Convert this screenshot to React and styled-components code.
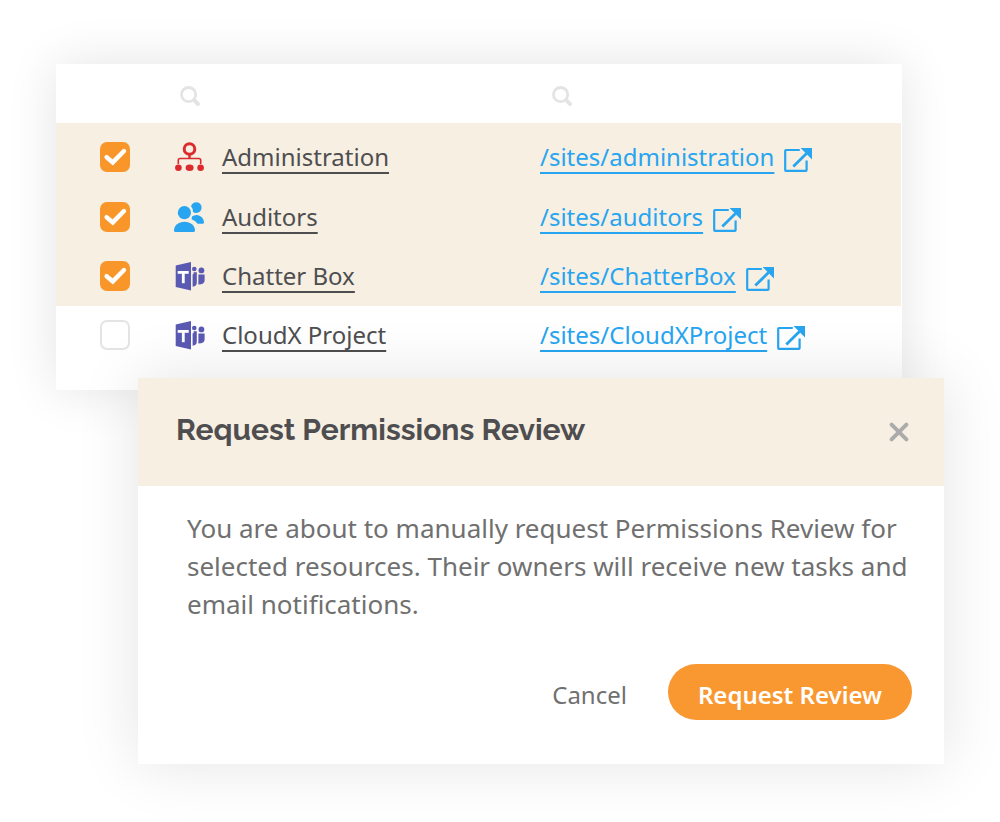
import React, { useState } from "react";
import styled, { createGlobalStyle } from "styled-components";

const resources = [
	{ id: 1, name: "Administration", url: "/sites/administration", type: "org" },
	{ id: 2, name: "Auditors", url: "/sites/auditors", type: "group" },
	{ id: 3, name: "Chatter Box", url: "/sites/ChatterBox", type: "teams" },
	{ id: 4, name: "CloudX Project", url: "/sites/CloudXProject", type: "teams" },
];

const OrgIcon = () => (
	<svg width="30" height="30" viewBox="0 0 30 30" fill="#db2b2d" aria-hidden="true">
		<circle cx="15.5" cy="7" r="5.3" fill="none" stroke="#db2b2d" strokeWidth="3" />
		<path d="M4.3 22V18.2Q4.3 16.5 6 16.5H25Q26.7 16.5 26.7 18.2V22" fill="none" stroke="#db2b2d" strokeWidth="1.6" />
		<rect x="14.3" y="13" width="2.4" height="4" />
		<circle cx="4.4" cy="25.8" r="3.3" />
		<ellipse cx="15.6" cy="25.8" rx="4" ry="3.3" />
		<circle cx="26.6" cy="25.8" r="3.3" />
	</svg>
);

const GroupIcon = () => (
	<svg width="30" height="30" viewBox="0 0 30 30" fill="#27a5f0" aria-hidden="true">
		<circle cx="10.4" cy="10.7" r="6.6" />
		<path d="M0 28.4C0 23.6 4.6 19.7 10.5 19.7S21 23.6 21 28.4Q21 30 19.4 30H1.6Q0 30 0 28.4Z" />
		<path d="M17 4.2A5.4 5.4 0 1 1 19 9.9Q19.2 6.6 17 4.2Z" />
		<path d="M18 14.6Q20 12.9 22.6 13C26.8 13.2 30 16.5 30 20.4Q30 21.8 28.6 21.8H23.6Q21.4 18.4 17.6 17.2Z" />
	</svg>
);

const TeamsIcon = () => (
	<svg width="30" height="30" viewBox="0 0 30 30" fill="#5a5ab3" aria-hidden="true">
		<path d="M1.7 4.6L17 1V29.4L1.7 26Z" />
		<rect x="3.7" y="10" width="11" height="2.8" fill="#fff" />
		<rect x="7.9" y="10" width="2.8" height="12.2" fill="#fff" />
		<circle cx="20.3" cy="8" r="2.3" />
		<circle cx="27.4" cy="9.4" r="2.9" />
		<path d="M18.6 13.2H19.6V11.2H22.8V21.6Q22.8 25.6 18.6 25.8Z" />
		<path d="M24.4 13.4H30.6V19.4Q30.6 23.2 24.4 23.6Z" />
	</svg>
);

const ExternalIcon = () => (
	<svg width="28" height="24" viewBox="0 0 28 24" aria-hidden="true">
		<path d="M15.8 2H2Q1.2 2 1.2 2.8V22Q1.2 22.8 2 22.8H21.8Q22.6 22.8 22.6 22V12.4" fill="none" stroke="#27a5f0" strokeWidth="2.2" />
		<path d="M9.3 18.6L22.5 5.4" stroke="#27a5f0" strokeWidth="2.8" />
		<path d="M16.6 0H28V11.6Z" fill="#27a5f0" />
	</svg>
);

const SearchIcon = () => (
	<svg width="20" height="20" viewBox="0 0 20 20" fill="none" stroke="#e4e4e4" aria-hidden="true">
		<circle cx="8.6" cy="8.6" r="7.1" strokeWidth="2.8" />
		<path d="M14.2 14.2L18 18" strokeWidth="4" strokeLinecap="round" />
	</svg>
);

const CloseIcon = () => (
	<svg width="20" height="20" viewBox="0 0 20 20" fill="none" stroke="#ababab" aria-hidden="true">
		<path d="M2.6 2.6L17.4 17.4M17.4 2.6L2.6 17.4" strokeWidth="4" strokeLinecap="round" />
	</svg>
);

const icons = { org: OrgIcon, group: GroupIcon, teams: TeamsIcon };

const App = () => {
	const [selected, setSelected] = useState([1, 2, 3]);

	const toggle = (id) => {
		setSelected(
			selected.includes(id) ? selected.filter((el) => el !== id) : [...selected, id]
		);
	};

	return (
		<Page>
			<GlobalStyle />
			<TableCard>
				<Table>
					<colgroup>
						<CheckCol />
						<NameCol />
						<col />
					</colgroup>
					<thead>
						<tr>
							<HeadCell />
							<HeadCell $indent={6}>
								<IconButton aria-label="Search by name">
									<SearchIcon />
								</IconButton>
							</HeadCell>
							<HeadCell $indent={12}>
								<IconButton aria-label="Search by address">
									<SearchIcon />
								</IconButton>
							</HeadCell>
						</tr>
					</thead>
					<tbody>
						{resources.map((props) => {
							const Icon = icons[props.type];
							return (
								<Row key={props.id} $selected={selected.includes(props.id)}>
									<CheckCell>
										<Checkbox
											type="checkbox"
											aria-label={props.name}
											checked={selected.includes(props.id)}
											onChange={() => toggle(props.id)}
										/>
									</CheckCell>
									<Cell>
										<Holder $gap={18}>
											<Icon />
											<NameLink href="#">{props.name}</NameLink>
										</Holder>
									</Cell>
									<Cell>
										<SiteHolder $gap={10}>
											<SiteLink href="#">{props.url}</SiteLink>
											<ExternalIcon />
										</SiteHolder>
									</Cell>
								</Row>
							);
						})}
					</tbody>
				</Table>
			</TableCard>

			<Dialog role="dialog" aria-labelledby="dialog-title">
				<DialogHead>
					<Title id="dialog-title">Request Permissions Review</Title>
					<IconButton aria-label="Close">
						<CloseIcon />
					</IconButton>
				</DialogHead>
				<DialogBody>
					<Message>
						You are about to manually request Permissions Review for selected
						resources. Their owners will receive new tasks and email notifications.
					</Message>
					<Actions>
						<CancelButton>Cancel</CancelButton>
						<SubmitButton>Request Review</SubmitButton>
					</Actions>
				</DialogBody>
			</Dialog>
		</Page>
	);
};

export default App;

const GlobalStyle = createGlobalStyle`
	* {
		box-sizing: border-box;
	}

	body {
		margin: 0;
		background: #fff;
		font-family: "Segoe UI", "Noto Sans", sans-serif;
	}

	svg {
		display: block;
		flex-shrink: 0;
		overflow: visible;
	}
`;

const Page = styled.main`
	padding: 64px 56px 58px;
`;

const TableCard = styled.section`
	margin-right: 42px;
	padding: 0 1px 25px 0;
	background: #fff;
	box-shadow: 0 0 48px rgba(0, 0, 0, 0.11);
`;

const Table = styled.table`
	width: 100%;
	table-layout: fixed;
	border-collapse: collapse;
`;

const CheckCol = styled.col`
	width: 118px;
`;

const NameCol = styled.col`
	width: 366px;
`;

const HeadCell = styled.th`
	height: 59px;
	padding: 5px 0 0 ${({ $indent }) => $indent || 0}px;
	text-align: left;
`;

const Cell = styled.td`
	height: 59px;
	padding: 0 0 2px;
`;

const CheckCell = styled(Cell)`
	padding-left: 44px;
`;

const Row = styled.tr`
	background: ${({ $selected }) => ($selected ? "#f7efe2" : "transparent")};

	&:first-child td {
		height: 65px;
		padding-top: 4px;
	}
`;

const Holder = styled.div`
	display: flex;
	align-items: center;
	gap: ${({ $gap }) => $gap}px;
`;

const SiteHolder = styled(Holder)`
	svg {
		margin-top: 6px;
	}
`;

const Checkbox = styled.input`
	appearance: none;
	display: block;
	width: 30px;
	height: 30px;
	margin: 0;
	border: 2px solid #e4e4e4;
	border-radius: 7px;
	background: #fff;
	cursor: pointer;

	&:checked {
		border: 0;
		background: #f99629
			url("data:image/svg+xml,%3Csvg xmlns='http://www.w3.org/2000/svg' viewBox='0 0 30 30' fill='none' stroke='white' stroke-width='4.4' stroke-linecap='round'%3E%3Cpath d='M6.6 15.2L12.8 20.4L24 9'/%3E%3C/svg%3E");
	}
`;

const NameLink = styled.a`
	color: #4e4e50;
	font-size: 24px;
	line-height: 32px;
	text-decoration: underline 2px;
	text-underline-offset: 6px;
`;

const SiteLink = styled(NameLink)`
	color: #27a5f0;
`;

const Button = styled.button`
	padding: 0;
	border: 0;
	background: none;
	font-family: inherit;
	cursor: pointer;
`;

const IconButton = styled(Button)`
	display: block;
`;

const Dialog = styled.section`
	position: relative;
	margin: -12px 0 0 82px;
	background: #fff;
	box-shadow: 0 0 60px rgba(0, 0, 0, 0.11);
`;

const DialogHead = styled.header`
	display: flex;
	align-items: center;
	justify-content: space-between;
	height: 108px;
	padding: 0 35px 0 38px;
	background: #f7efe2;
`;

const Title = styled.h2`
	margin: 0;
	padding-bottom: 4px;
	color: #4e4e50;
	font-family: Raleway, Lato, sans-serif;
	font-size: 30px;
	font-weight: 700;
	line-height: 40px;
`;

const DialogBody = styled.div`
	padding: 23px 32px 44px 49px;
`;

const Message = styled.p`
	margin: 0;
	color: #707070;
	font-size: 26px;
	line-height: 38px;
`;

const Actions = styled.div`
	display: flex;
	align-items: center;
	justify-content: flex-end;
	gap: 41px;
	margin-top: 41px;
`;

const CancelButton = styled(Button)`
	padding-top: 5px;
	color: #707070;
	font-size: 24px;
	line-height: 34px;
`;

const SubmitButton = styled(Button)`
	height: 56px;
	padding: 4px 30px 0;
	border-radius: 28px;
	background: #f99830;
	color: #fff;
	font-size: 24px;
	font-weight: 600;
`;
